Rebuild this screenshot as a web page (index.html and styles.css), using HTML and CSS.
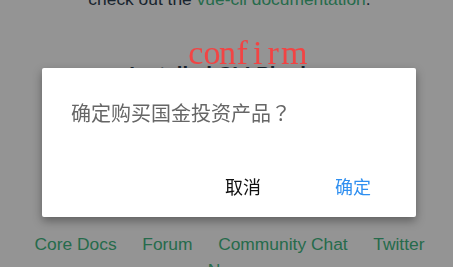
FILE: index.html
```html
<!DOCTYPE html>
<html lang="zh-CN">
<head>
<meta charset="utf-8">
<title>confirm</title>
<link rel="stylesheet" href="styles.css">
</head>
<body>
  <div class="page">
    <p class="guide">check out the <a class="link" href="#">vue-cli documentation</a>.</p>
    <h3 class="section-title">Installed CLI Plugins</h3>
    <ul class="list plugins">
      <li><a class="link" href="#">babel</a></li>
      <li><a class="link" href="#">eslint</a></li>
    </ul>
    <h3 class="section-title essential">Essential Links</h3>
    <ul class="list links">
      <li><a class="link" href="#">Core Docs</a></li>
      <li><a class="link" href="#">Forum</a></li>
      <li><a class="link" href="#">Community Chat</a></li>
      <li><a class="link" href="#">Twitter</a></li>
      <li><a class="link" href="#">News</a></li>
    </ul>
  </div>

  <div class="overlay"></div>

  <div class="confirm-label"><span class="cell">c</span><span class="cell">o</span><span class="cell">n</span><span class="cell">f</span><span class="cell">i</span><span class="cell">r</span><span class="cell">m</span></div>

  <div class="dialog">
    <div class="dialog-message">确定购买国金投资产品<span class="punct" lang="ja">？</span></div>
    <div class="dialog-actions">
      <button class="btn btn-cancel">取消</button>
      <button class="btn btn-confirm">确定</button>
    </div>
  </div>
</body>
</html>
```

FILE: styles.css
```css
html, body {
  margin: 0;
  padding: 0;
  height: 100%;
  overflow: hidden;
  background: #ffffff;
}

body {
  font-family: "Liberation Sans", Arial, sans-serif;
  color: #2c3e50;
}

.page {
  padding-left: 6px;
  text-align: center;
  font-size: 17.4px;
}

.guide {
  margin: -11px 0 0;
  line-height: 20px;
}

.link {
  color: #42b983;
  text-decoration: none;
}

.section-title {
  margin: 53px 0 0;
  font-size: 20.4px;
  line-height: 24px;
  font-weight: bold;
  color: #2c3e50;
}

.section-title.essential {
  margin-top: 40px;
}

.list {
  list-style: none;
  padding: 0;
  margin: 16px 0 0;
  line-height: 26px;
}

.list li {
  display: inline-block;
  margin: 0 10.4px;
}

.links {
  margin-top: 38.5px;
}

.overlay {
  position: fixed;
  inset: 0;
  background: rgba(0, 0, 0, 0.42);
}

.confirm-label {
  position: absolute;
  left: 188px;
  top: 32.5px;
  display: flex;
  font-family: "Liberation Serif", "Times New Roman", serif;
  font-size: 34px;
  line-height: 40px;
  color: #f24444;
}

.cell {
  display: inline-block;
  width: 15.5px;
  text-align: center;
  white-space: nowrap;
}

.dialog {
  position: absolute;
  left: 42px;
  top: 68px;
  width: 374px;
  background: #ffffff;
  border-radius: 2px;
  box-shadow: 0 4px 10px rgba(0, 0, 0, 0.35);
  font-family: "Noto Sans CJK SC", "Liberation Sans", sans-serif;
  display: flex;
  flex-direction: column;
}

.dialog-message {
  padding: 31px 29px 0;
  font-size: 20px;
  line-height: 28px;
  color: #666666;
  text-spacing-trim: space-all;
}

.punct {
  font-family: "Noto Sans CJK JP", "Noto Sans CJK SC", sans-serif;
}

.dialog-actions {
  display: flex;
  justify-content: flex-end;
  gap: 20px;
  padding: 39px 18px 11px;
}

.btn {
  width: 90px;
  height: 40px;
  padding: 0;
  border: none;
  background: transparent;
  font-family: "Noto Sans CJK SC", "Liberation Sans", sans-serif;
  font-size: 18px;
  line-height: 40px;
  cursor: pointer;
}

.btn-cancel {
  color: #111111;
}

.btn-confirm {
  color: #2f8ff0;
}
```
